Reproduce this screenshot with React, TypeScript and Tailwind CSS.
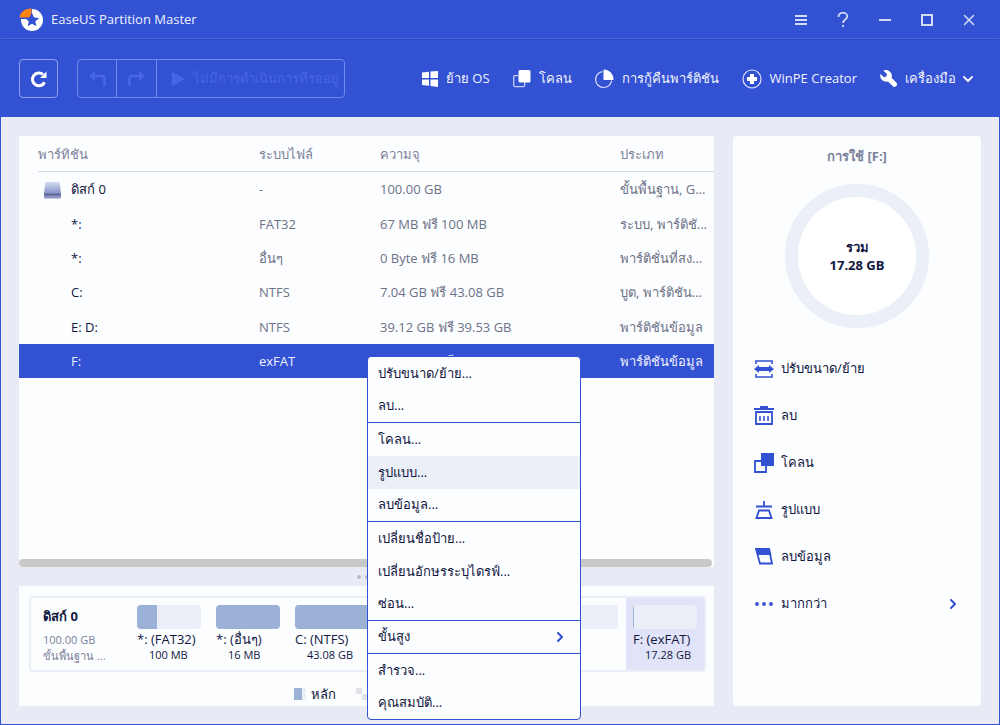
import React from 'react';
import { ChevronDown, ChevronRight, X } from 'lucide-react';

const PARTITIONS = [
  { name: '*:', fs: 'FAT32', capacity: '67 MB ฟรี 100 MB', type: 'ระบบ, พาร์ติชั...' },
  { name: '*:', fs: 'อื่นๆ', capacity: '0 Byte ฟรี 16 MB', type: 'พาร์ติชั่นที่สง...' },
  { name: 'C:', fs: 'NTFS', capacity: '7.04 GB ฟรี 43.08 GB', type: 'บูต, พาร์ติชัน...' },
  { name: 'E: D:', fs: 'NTFS', capacity: '39.12 GB ฟรี 39.53 GB', type: 'พาร์ติชันข้อมูล' },
  { name: 'F:', fs: 'exFAT', capacity: '17.28 GB ฟรี 17.28 GB', type: 'พาร์ติชันข้อมูล', selected: true },
];

const MENU_GROUPS = [
  ['ปรับขนาด/ย้าย...', 'ลบ...'],
  ['โคลน...', 'รูปแบบ...', 'ลบข้อมูล...'],
  ['เปลี่ยนชื่อป้าย...', 'เปลี่ยนอักษรระบุไดรฟ์...', 'ซ่อน...'],
  ['ขั้นสูง'],
  ['สำรวจ...', 'คุณสมบัติ...'],
];

const Logo = () => (
  <svg width="25" height="24" viewBox="0 0 25 24" aria-hidden="true">
    <circle cx="13" cy="12" r="11" fill="#fff" />
    <path d="M13 11V0H0v11z" fill="#3351d3" />
    <path d="M12.500 5l-2 4.500H0.500C1 4.500 5.500 0.500 12.500 0.500z" fill="#ff8412" />
    <path d="M13 5l2.100 4.600 5 .5-3.800 3.300 1.200 4.900-4.500-2.600-4.300 2.600 1.100-4.900L6 10.100l4.900-.5z" fill="#3351d3" />
  </svg>
);

const RefreshIcon = () => (
  <svg width="18" height="18" viewBox="0 0 18 18" fill="none" aria-hidden="true">
    <path d="M14.600 12.200A6.400 6.400 0 1 1 13 4.400" stroke="#fff" strokeWidth="3" />
    <path d="M16.500 1.500v6.500H10z" fill="#fff" />
  </svg>
);

const UndoIcon = ({ className }: { className?: string }) => (
  <svg className={className} width="17" height="15" viewBox="0 0 17 15" fill="none" aria-hidden="true">
    <path d="M5 5h8q2.500 0 2.500 2.500V15" stroke="#4766e4" strokeWidth="2.600" />
    <path d="M0 5L6 0v10z" fill="#4766e4" />
  </svg>
);

const WindowsIcon = () => (
  <svg width="16" height="16" viewBox="0 0 16 16" fill="#fff" aria-hidden="true">
    <path d="M0 1.500L7 .8V7H0zM8.500.6L16 0v7H8.500zM0 8.500h7v6.200l-7-.6zM8.500 8.500H16V16l-7.500-1z" />
  </svg>
);

const CloneLightIcon = () => (
  <svg width="18" height="18" viewBox="0 0 18 18" fill="none" aria-hidden="true">
    <path d="M5 5.700H2.200Q.7 5.700.7 7.200v8q0 1.500 1.500 1.500h8q1.500 0 1.500-1.500V12" stroke="#c6d0fa" strokeWidth="1.300" />
    <rect x="5.500" y="0" width="12" height="12.500" rx="1.500" fill="#fff" />
  </svg>
);

const PieIcon = () => (
  <svg width="19" height="20" viewBox="0 0 19 20" fill="none" aria-hidden="true">
    <path d="M7.500 2.600A8 8 0 1 0 16.600 11.500" stroke="#dde3fb" strokeWidth="1.200" />
    <path d="M8.500 0.500a10 10 0 0 1 10 10.500h-10z" fill="#fff" />
  </svg>
);

const PlusCircleIcon = () => (
  <svg width="20" height="20" viewBox="0 0 20 20" aria-hidden="true">
    <circle cx="10" cy="10" r="9" fill="none" stroke="#dde3fb" strokeWidth="1.200" />
    <path d="M8 5h4v3h3v4h-3v3H8v-3H5V8h3z" fill="#fff" />
  </svg>
);

const WrenchIcon = () => (
  <svg width="17" height="17" viewBox="0 0 17 17" aria-hidden="true">
    <path d="M3.300.6A6 6 0 0 1 11.600 7.800l4.600 4.700a2.400 2.400 0 0 1-3.600 3.600L8 11.500A6 6 0 0 1 .5 4L4 7.200 6.400 6.500 7 4z" fill="#fff" />
  </svg>
);

const DiskIcon = () => (
  <svg width="17" height="17" viewBox="0 0 17 17" aria-hidden="true">
    <defs>
      <linearGradient id="disk" x1="0" y1="0" x2="0" y2="1">
        <stop offset="0" stopColor="#d3dcf0" />
        <stop offset="1" stopColor="#8795cb" />
      </linearGradient>
    </defs>
    <path d="M2.500 0h12q1 0 1.200 1L17 11H0L1.300 1Q1.500 0 2.500 0z" fill="url(#disk)" />
    <path d="M0 11h17v4q0 1.500-1.500 1.500h-14Q0 16.500 0 15z" fill="#8e94c4" />
    <path d="M0 11.500h17v2H0z" fill="#5f6899" />
  </svg>
);

const ResizeIcon = () => (
  <svg width="20" height="18" viewBox="0 0 20 18" fill="none" stroke="#3351d3" aria-hidden="true">
    <path d="M2 4V1h16v3M2 14v3h16v-3" strokeWidth="1.600" />
    <path d="M0 9l5-4v2h10V5l5 4-5 4v-2H5v2z" fill="#3351d3" stroke="none" />
  </svg>
);

const TrashIcon = () => (
  <svg width="20" height="19" viewBox="0 0 20 19" fill="none" stroke="#3351d3" aria-hidden="true">
    <path d="M0 3h20M6 1h8" strokeWidth="2" />
    <path d="M2 6h16v12H2z" strokeWidth="1.800" />
    <path d="M6 10v5M10 10v5M14 10v5" strokeWidth="1.600" />
  </svg>
);

const CloneIcon = () => (
  <svg width="20" height="20" viewBox="0 0 20 20" aria-hidden="true">
    <path d="M1 8h11v11H1z" fill="none" stroke="#3351d3" strokeWidth="1.800" />
    <path d="M7 0h13v13H7z" fill="#3351d3" />
  </svg>
);

const FormatIcon = () => (
  <svg width="20" height="18" viewBox="0 0 20 18" fill="none" stroke="#3351d3" strokeWidth="1.800" aria-hidden="true">
    <path d="M10 0v5M2 5.500h16M5 9.500h10l2.500 7.500h-15z" />
  </svg>
);

const EraseIcon = () => (
  <svg width="20" height="17" viewBox="0 0 20 17" aria-hidden="true">
    <path d="M2 1h13l3 14.500H6z" fill="none" stroke="#3351d3" strokeWidth="1.800" />
    <path d="M1 0h14.500l2 7H4z" fill="#3351d3" />
  </svg>
);

const MoreIcon = () => (
  <svg width="20" height="4" viewBox="0 0 20 4" fill="#3351d3" aria-hidden="true">
    <circle cx="3" cy="2" r="1.900" />
    <circle cx="10" cy="2" r="1.900" />
    <circle cx="17" cy="2" r="1.900" />
  </svg>
);

const TOOLS = [
  { icon: <WindowsIcon />, label: 'ย้าย OS' },
  { icon: <CloneLightIcon />, label: 'โคลน' },
  { icon: <PieIcon />, label: 'การกู้คืนพาร์ติชัน' },
  { icon: <PlusCircleIcon />, label: 'WinPE Creator' },
  { icon: <WrenchIcon />, label: 'เครื่องมือ', dropdown: true },
];

const ACTIONS = [
  { icon: <ResizeIcon />, label: 'ปรับขนาด/ย้าย' },
  { icon: <TrashIcon />, label: 'ลบ' },
  { icon: <CloneIcon />, label: 'โคลน' },
  { icon: <FormatIcon />, label: 'รูปแบบ' },
  { icon: <EraseIcon />, label: 'ลบข้อมูล' },
  { icon: <MoreIcon />, label: 'มากกว่า', more: true },
];

const TitleBar = () => (
  <header className="flex h-[39px] items-center border-b border-[#2a48c0] pl-[18px] pr-[9px] shadow-[inset_0_-1px_0_#4866e0]">
    <Logo />
    <h1 className="ml-[7px] flex-1 text-[#eef1fd]">EaseUS Partition Master</h1>
    <div className="flex text-[#d5dcf8]">
      <button aria-label="Menu" className="flex h-8 w-[42px] items-center justify-center">
        <svg width="12" height="12" viewBox="0 0 12 12" stroke="currentColor" strokeWidth="2"><path d="M0 2h12M0 6h12M0 10h12" /></svg>
      </button>
      <button aria-label="Help" className="flex h-8 w-[42px] items-center justify-center">
        <svg width="12" height="16" viewBox="0 0 12 16" fill="none" stroke="currentColor" strokeWidth="1.800"><path d="M1.500 5V4.500a4.300 3.700 0 0 1 8.800 0C10.300 7.500 6 7.500 6 11M6 13v2" /></svg>
      </button>
      <button aria-label="Minimize" className="flex h-8 w-[42px] items-center justify-center">
        <svg width="12" height="2" viewBox="0 0 12 2"><path d="M0 0h12v2H0z" fill="currentColor" /></svg>
      </button>
      <button aria-label="Maximize" className="flex h-8 w-[42px] items-center justify-center">
        <svg width="12" height="12" viewBox="0 0 12 12" fill="none" stroke="currentColor" strokeWidth="2"><path d="M1 1h10v10H1z" /></svg>
      </button>
      <button aria-label="Close" className="flex h-8 w-[42px] items-center justify-center">
        <X size={18} strokeWidth={2} />
      </button>
    </div>
  </header>
);

const Toolbar = () => (
  <div className="flex h-[77px] items-center pl-[18px] pr-[23px]">
    <button aria-label="Refresh" className="flex size-[39px] items-center justify-center rounded-sm border border-[#8fa2ef]">
      <RefreshIcon />
    </button>
    <div className="ml-[19px] flex h-[39px] divide-x divide-[#7189e8] rounded-sm border border-[#7189e8]">
      <button aria-label="Undo" disabled className="flex w-[39px] items-center justify-center">
        <UndoIcon />
      </button>
      <button aria-label="Redo" disabled className="flex w-10 items-center justify-center">
        <UndoIcon className="-scale-x-100" />
      </button>
      <button disabled className="flex items-center gap-2 pr-[5px] pl-[15px] text-[#4766e4]">
        <svg width="13" height="14" viewBox="0 0 13 14" aria-hidden="true"><path d="M0 0l13 7-13 7z" fill="#4766e4" /></svg>
        ไม่มีการดำเนินการที่รออยู่
      </button>
    </div>
    <nav className="ml-auto flex items-center gap-[23px] whitespace-nowrap text-[#f1f4fe]">
      {TOOLS.map((tool) => (
        <button key={tool.label} className="flex items-center gap-2">
          {tool.icon}
          {tool.label}
          {tool.dropdown && <ChevronDown size={16} strokeWidth={3} className="-ml-1" />}
        </button>
      ))}
    </nav>
  </div>
);

const PartitionTable = () => (
  <section className="flex flex-1 flex-col bg-[#fcfdfe]">
    <table className="h-[242px] w-full table-fixed text-left whitespace-nowrap text-[#6c7287]">
      <thead>
        <tr className="h-9 text-[#7a819b]">
          <th className="w-[240px] pl-[19px] font-normal">
            <span className="flex h-9 items-center border-b border-[#d4d7e8] pt-0.5">พาร์ทิชัน</span>
          </th>
          <th className="w-[121px] font-normal">
            <span className="flex h-9 items-center border-b border-[#d4d7e8] pt-0.5">ระบบไฟล์</span>
          </th>
          <th className="w-[240px] font-normal">
            <span className="flex h-9 items-center border-b border-[#d4d7e8] pt-0.5">ความจุ</span>
          </th>
          <th className="font-normal">
            <span className="flex h-9 items-center border-b border-[#d4d7e8] pt-0.5">ประเภท</span>
          </th>
        </tr>
      </thead>
      <tbody className="[&_td]:pt-0.5">
        <tr>
          <td className="pl-[25px] text-[#11173f]">
            <span className="flex items-center gap-[10px]">
              <DiskIcon />
              ดิสก์ 0
            </span>
          </td>
          <td>-</td>
          <td>100.00 GB</td>
          <td>ขั้นพื้นฐาน, G...</td>
        </tr>
        {PARTITIONS.map((p, i) => (
          <tr key={i} className={p.selected ? 'bg-[#3351d3] text-[#eef1fd]' : ''}>
            <td className={p.selected ? 'pl-[52px]' : 'pl-[52px] text-[#11173f]'}>{p.name}</td>
            <td>{p.fs}</td>
            <td>{p.capacity}</td>
            <td>{p.type}</td>
          </tr>
        ))}
      </tbody>
    </table>
    <div className="mt-auto mr-[2px] h-2 rounded-full bg-[#c9c9c9]" />
  </section>
);

type DiskBlockProps = { label: string; size: string; used: number; className?: string };

const DiskBlock = ({ label, size, used, className = 'w-16' }: DiskBlockProps) => (
  <div className={className}>
    <div className="h-6 overflow-hidden rounded-sm bg-[#ebeff7]">
      <div className="h-full bg-[#9bb2d6]" style={{ width: `${used}%` }} />
    </div>
    <div className="mt-[2px] leading-4 font-medium">{label}</div>
    <div className="pl-3 text-[11px] leading-4 font-medium">{size}</div>
  </div>
);

const DiskMap = () => (
  <section className="bg-[#fcfdfe] pt-[10px] pr-2 pb-[2px] pl-[10px]">
    <div className="flex h-[76px] rounded border-2 border-[#ebedf7] whitespace-nowrap text-[#11173f]">
      <div className="w-[106px] pt-[10px] pl-3">
        <div className="leading-4 font-bold">ดิสก์ 0</div>
        <div className="mt-2 text-[11px] leading-4 text-[#7a819b]">100.00 GB</div>
        <div className="text-[11px] leading-4 text-[#7a819b]">ขั้นพื้นฐาน ...</div>
      </div>
      <div className="flex flex-1 gap-[15px] pt-[7px] pr-2">
        <DiskBlock label="*: (FAT32)" size="100 MB" used={32} />
        <DiskBlock label="*: (อื่นๆ)" size="16 MB" used={100} />
        <DiskBlock label="C: (NTFS)" size="43.08 GB" used={84} className="flex-1" />
        <DiskBlock label="E: D: (NTFS)" size="39.53 GB" used={1} className="flex-1" />
      </div>
      <div className="bg-[#e1e4f8] px-[7px] pt-[7px]">
        <DiskBlock label="F: (exFAT)" size="17.28 GB" used={2} />
      </div>
    </div>
    <div className="mt-3 flex items-center justify-center gap-5 leading-5 text-[#11173f]">
      <span className="flex items-center gap-[5px]">
        <span className="flex h-3 w-3 bg-[#ebeff7]"><span className="w-2 bg-[#9bb2d6]" /></span>
        หลัก
      </span>
      <span className="flex items-center gap-[5px]">
        <svg width="12" height="12" viewBox="0 0 12 12" fill="#e4e2e8" aria-hidden="true"><path d="M0 0h6v6H0zM6 6h6v6H6z" /></svg>
        ไม่ได้จัดสรร
      </span>
    </div>
  </section>
);

const Sidebar = () => (
  <aside className="w-[248px] rounded-sm bg-[#fcfdfe] text-[#11173f]">
    <h2 className="pt-[10px] text-center leading-5 font-bold text-[#7a819b]">การใช้ [F:]</h2>
    <div className="mx-auto mt-[18px] flex size-36 flex-col items-center justify-center rounded-full border-[13px] border-[#ebeff7] bg-white leading-[18px] font-bold">
      <span>รวม</span>
      <span>17.28 GB</span>
    </div>
    <ul className="mt-[17px]">
      {ACTIONS.map((action) => (
        <li key={action.label}>
          <button className="flex h-[47px] w-full items-center gap-[7px] pr-5 pl-[21px] text-left">
            {action.icon}
            <span className="flex-1">{action.label}</span>
            {action.more && <ChevronRight size={16} strokeWidth={3} className="text-[#3351d3]" />}
          </button>
        </li>
      ))}
    </ul>
  </aside>
);

const ContextMenu = () => (
  <div role="menu" className="absolute top-[355px] left-[366px] w-[214px] divide-y divide-[#3351d3] rounded-sm border border-[#3351d3] bg-[#fcfdfe] text-[#11173f]">
    {MENU_GROUPS.map((group, g) => (
      <div key={g}>
        {group.map((item) => (
          <button
            key={item}
            role="menuitem"
            className={`flex h-[33px] w-full items-center justify-between pr-3 pl-[10px] whitespace-nowrap last:h-8 ${item === 'รูปแบบ...' ? 'bg-[#ebeff7]' : ''}`}
          >
            {item}
            {item === 'ขั้นสูง' && <ChevronRight size={16} strokeWidth={3} className="text-[#3351d3]" />}
          </button>
        ))}
      </div>
    ))}
  </div>
);

export default function App() {
  return (
    <div className="relative flex min-h-screen flex-col border border-[#3351d3] bg-[#e8ebf6] font-['Open_Sans','Noto_Sans',sans-serif] text-[13px]">
      <div className="bg-[#3351d3]">
        <TitleBar />
        <Toolbar />
      </div>
      <main className="flex flex-1 gap-[19px] px-[18px] pt-[19px] pb-[18px]">
        <div className="flex min-w-0 flex-1 flex-col">
          <PartitionTable />
          <div className="flex h-[19px] items-center justify-center gap-1" role="separator">
            <span className="size-1 rounded-full bg-[#b9bac4]" />
            <span className="size-1 rounded-full bg-[#b9bac4]" />
            <span className="size-1 rounded-full bg-[#b9bac4]" />
          </div>
          <DiskMap />
        </div>
        <Sidebar />
      </main>
      <ContextMenu />
    </div>
  );
}
